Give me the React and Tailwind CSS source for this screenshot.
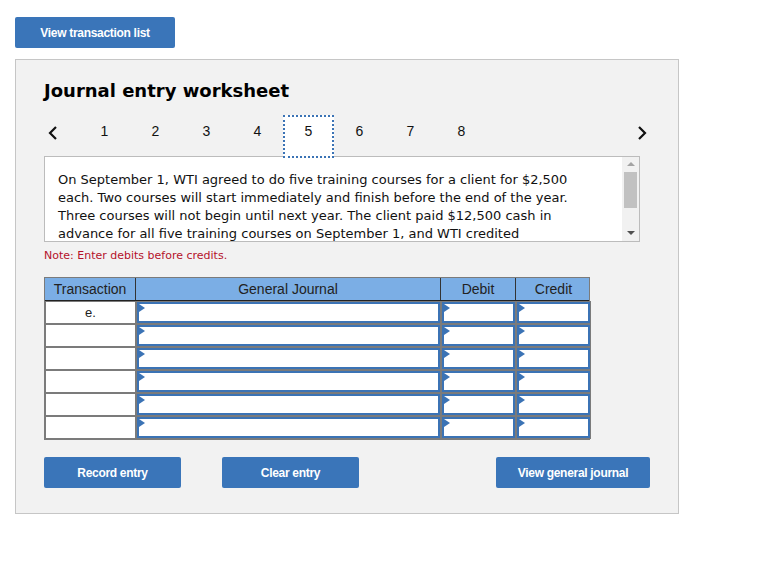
import React from 'react'

const verdana = { fontFamily: '"DejaVu Sans", Verdana, sans-serif' }
const arial = { fontFamily: '"Liberation Sans", Arial, sans-serif' }

const pages = [1, 2, 3, 4, 5, 6, 7, 8]

const Chevron = ({ dir }) => (
  <svg width="12" height="16" viewBox="0 0 12 16" fill="none">
    {dir === 'left' ? (
      <path d="M9 2 L3 8 L9 14" stroke="#111" strokeWidth="2.2" />
    ) : (
      <path d="M3 2 L9 8 L3 14" stroke="#111" strokeWidth="2.2" />
    )}
  </svg>
)

const InputCell = () => (
  <div className="h-full border border-[#7b7b7b]">
    <div className="relative h-full border-2 border-[#3b73b5] bg-white">
      <span className="absolute left-0 top-0 h-0 w-0 border-y-[4px] border-l-[6px] border-y-transparent border-l-[#3b73b5]" />
    </div>
  </div>
)

const Button = ({ children, className }) => (
  <button
    className={`h-[31px] rounded-[2px] bg-[#3a75b9] text-[12px] font-bold tracking-[-0.3px] text-white ${className}`}
    style={arial}
  >
    {children}
  </button>
)

export default function App() {
  const rows = ['e.', '', '', '', '', '']

  return (
    <div className="min-h-[567px] w-[775px] bg-white pl-[15px] pt-[17px]">
      <Button className="w-[160px]">View transaction list</Button>

      <div className="mt-[11px] h-[455px] w-[664px] border border-[#c6c6c6] bg-[#f2f2f2] pl-[28px] pt-[19px]">
        <h1 className="text-[18px] font-bold leading-[24px] text-black" style={verdana}>
          Journal entry worksheet
        </h1>

        {/* pager */}
        <div className="mt-[12px] flex h-[43px] w-[606px] items-center" style={arial}>
          <div className="mb-[8px] flex w-[35px] justify-start pl-[3px]">
            <Chevron dir="left" />
          </div>
          <div className="flex">
            {pages.map((p) => (
              <div
                key={p}
                className={`flex h-[43px] w-[51px] items-center justify-center pb-[10px] text-[14px] text-[#111] ${
                  p === 5 ? 'border-2 border-dotted border-[#3b73b5] bg-white' : ''
                }`}
              >
                {p}
              </div>
            ))}
          </div>
          <div className="mb-[8px] ml-auto flex pr-[2px]">
            <Chevron dir="right" />
          </div>
        </div>

        {/* question text */}
        <div className="-mt-[2px] flex h-[86px] w-[596px] border border-[#bcbcbc] bg-white">
          <div
            className="h-full flex-1 overflow-hidden pl-[13px] pr-[40px] pt-[14px] text-[13px] leading-[18px] text-[#111]"
            style={verdana}
          >
            On September 1, WTI agreed to do five training courses for a client for $2,500 each. Two courses will
            start immediately and finish before the end of the year. Three courses will not begin until next year.
            The client paid $12,500 cash in advance for all five training courses on September 1, and WTI credited
            Unearned Revenue.
          </div>
          <div className="flex w-[17px] flex-col items-center bg-[#f1f1f1]">
            <span className="mt-[5px] h-0 w-0 border-x-[4px] border-b-[4px] border-x-transparent border-b-[#a3a3a3]" />
            <div className="mt-[6px] h-[36px] w-[13px] bg-[#c1c1c1]" />
            <span className="mt-auto mb-[6px] h-0 w-0 border-x-[4px] border-t-[4px] border-x-transparent border-t-[#505050]" />
          </div>
        </div>

        <p className="mt-[7px] text-[11px] leading-[14px] text-[#b5112b]" style={verdana}>
          Note: Enter debits before credits.
        </p>

        {/* journal table */}
        <div className="mt-[14px] w-[546px] border border-[#7b7b7b]" style={arial}>
          <div className="grid h-[23px] grid-cols-[91px_305px_75px_75px] border-b border-[#222] bg-[#7baee5] text-[14px] text-[#222]">
            <div className="flex items-center justify-center border-r border-[#333]">Transaction</div>
            <div className="flex items-center justify-center border-r border-[#333]">General Journal</div>
            <div className="flex items-center justify-center border-r border-[#333]">Debit</div>
            <div className="flex items-center justify-center">Credit</div>
          </div>
          {rows.map((r, i) => (
            <div key={i} className="grid h-[23px] grid-cols-[91px_305px_75px_75px]">
              <div className="flex items-center justify-center border border-[#7b7b7b] bg-white text-[13px] text-[#222]">
                {r}
              </div>
              <InputCell />
              <InputCell />
              <InputCell />
            </div>
          ))}
        </div>

        {/* actions */}
        <div className="mt-[17px] flex w-[606px]">
          <Button className="w-[137px]">Record entry</Button>
          <Button className="ml-[41px] w-[137px]">Clear entry</Button>
          <Button className="ml-auto w-[154px]">View general journal</Button>
        </div>
      </div>
    </div>
  )
}
